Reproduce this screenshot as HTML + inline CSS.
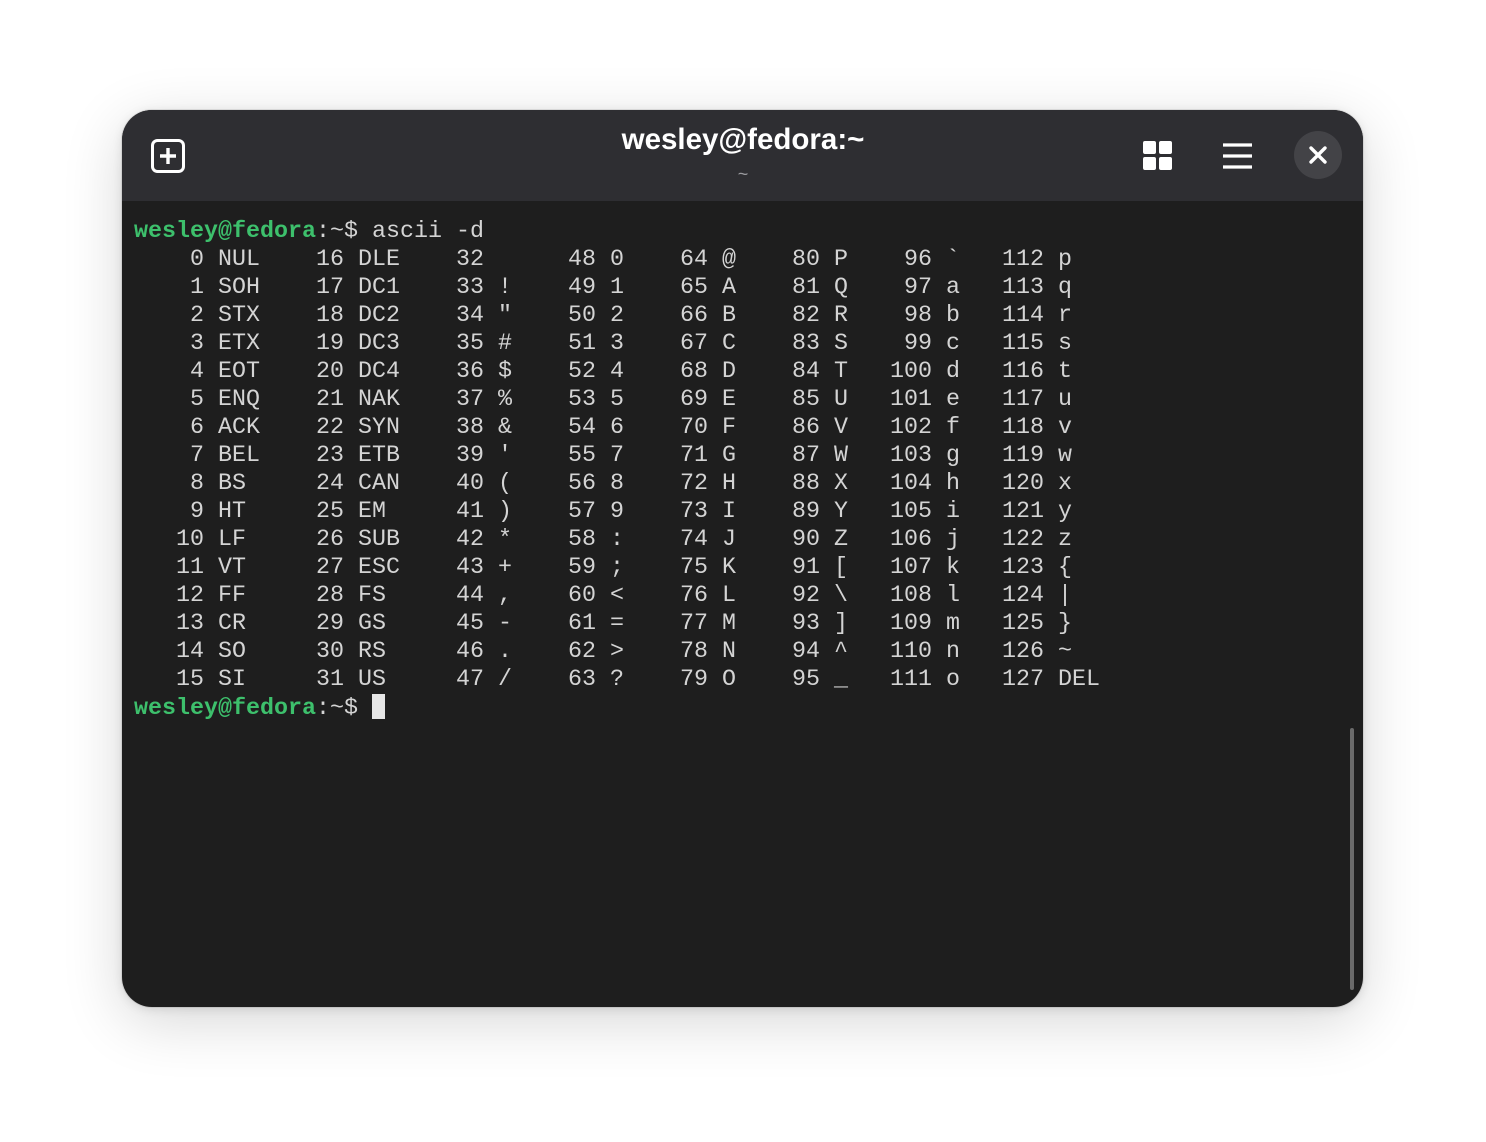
<!DOCTYPE html>
<html><head><meta charset="utf-8"><style>
html,body{margin:0;padding:0;width:1486px;height:1142px;background:#fff;overflow:hidden}
.win{position:absolute;left:122px;top:110px;width:1241px;height:897px;border-radius:30px;background:#1e1e1e;overflow:hidden;box-shadow:0 0 0 1px rgba(0,0,0,.08),0 14px 60px rgba(0,0,0,.16),0 2px 10px rgba(0,0,0,.1)}
.hdr{position:absolute;left:0;top:0;width:100%;height:91px;background:#2e2e32}
.title{position:absolute;left:0;right:0;top:123px;text-align:center;font:bold 29.5px "Liberation Sans",sans-serif;color:#fff}
.sub{position:absolute;left:0;right:0;top:164px;text-align:center;font:18px "Liberation Sans",sans-serif;color:#9a9a9e}
pre{position:absolute;left:134px;top:218px;margin:0;font:23.33px/28px "Liberation Mono",monospace;color:#d4d4d4}
.g{color:#3dc06c;font-weight:bold}
.cur{display:inline-block;width:13px;height:25px;background:#e6e6e6;vertical-align:-5px}
.sb{position:absolute;left:1350px;top:728px;width:4px;height:262px;border-radius:2px;background:#6a6a6a}
</style></head><body>
<div class="win"><div class="hdr"></div></div>
<svg style="position:absolute;left:150px;top:138px" width="36" height="36" viewBox="0 0 36 36"><rect x="2.5" y="2.5" width="31" height="31" rx="5" fill="none" stroke="#fff" stroke-width="3"/><path d="M18 10v16M10 18h16" stroke="#fff" stroke-width="3.4"/></svg>
<div class="title">wesley@fedora:~</div>
<div class="sub">~</div>
<svg style="position:absolute;left:1142px;top:140px" width="32" height="32"><rect x="1" y="1" width="13" height="13" rx="2" fill="#fff"/><rect x="17" y="1" width="13" height="13" rx="2" fill="#fff"/><rect x="1" y="17" width="13" height="13" rx="2" fill="#fff"/><rect x="17" y="17" width="13" height="13" rx="2" fill="#fff"/></svg>
<svg style="position:absolute;left:1222px;top:142px" width="32" height="28"><path d="M1 3h29M1 14h29M1 25h29" stroke="#fff" stroke-width="3.2"/></svg>
<div style="position:absolute;left:1294px;top:131px;width:48px;height:48px;border-radius:50%;background:#434347"></div>
<svg style="position:absolute;left:1308px;top:145px" width="20" height="20"><path d="M3 3l14 14M17 3L3 17" stroke="#fff" stroke-width="3.4" stroke-linecap="round"/></svg>
<pre><span class="g">wesley@fedora</span>:~$ ascii -d
    0 NUL    16 DLE    32      48 0    64 @    80 P    96 `   112 p
    1 SOH    17 DC1    33 !    49 1    65 A    81 Q    97 a   113 q
    2 STX    18 DC2    34 "    50 2    66 B    82 R    98 b   114 r
    3 ETX    19 DC3    35 #    51 3    67 C    83 S    99 c   115 s
    4 EOT    20 DC4    36 $    52 4    68 D    84 T   100 d   116 t
    5 ENQ    21 NAK    37 %    53 5    69 E    85 U   101 e   117 u
    6 ACK    22 SYN    38 &amp;    54 6    70 F    86 V   102 f   118 v
    7 BEL    23 ETB    39 '    55 7    71 G    87 W   103 g   119 w
    8 BS     24 CAN    40 (    56 8    72 H    88 X   104 h   120 x
    9 HT     25 EM     41 )    57 9    73 I    89 Y   105 i   121 y
   10 LF     26 SUB    42 *    58 :    74 J    90 Z   106 j   122 z
   11 VT     27 ESC    43 +    59 ;    75 K    91 [   107 k   123 {
   12 FF     28 FS     44 ,    60 &lt;    76 L    92 \   108 l   124 |
   13 CR     29 GS     45 -    61 =    77 M    93 ]   109 m   125 }
   14 SO     30 RS     46 .    62 &gt;    78 N    94 ^   110 n   126 ~
   15 SI     31 US     47 /    63 ?    79 O    95 _   111 o   127 DEL
<span class="g">wesley@fedora</span>:~$ <span class="cur"></span></pre>
<div class="sb"></div>
</body></html>
